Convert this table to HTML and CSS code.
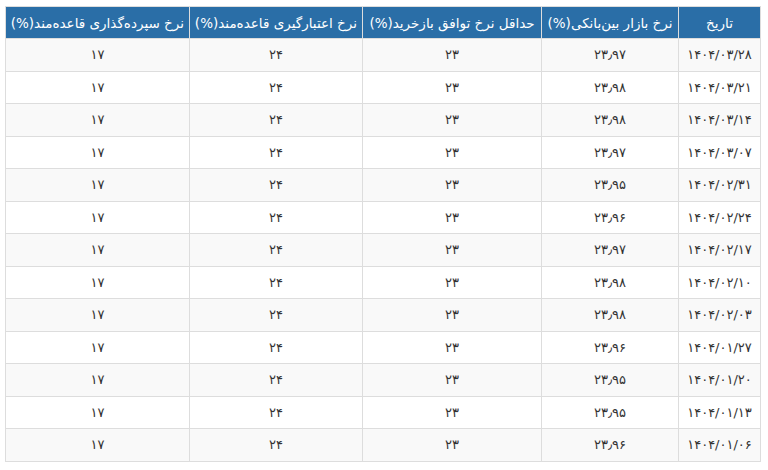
FILE: index.html
```html
<!DOCTYPE html>
<html lang="fa" dir="rtl">
<head>
<meta charset="utf-8">
<link rel="stylesheet" href="styles.css">
</head>
<body>
<table class="rates">
  <colgroup>
    <col class="c1"><col class="c2"><col class="c3"><col class="c4"><col class="c5">
  </colgroup>
  <thead>
    <tr>
      <th>تاریخ</th>
      <th>نرخ بازار بین‌بانکی(%)</th>
      <th>حداقل نرخ توافق بازخرید(%)</th>
      <th>نرخ اعتبارگیری قاعده‌مند(%)</th>
      <th>نرخ سپرده‌گذاری قاعده‌مند(%)</th>
    </tr>
  </thead>
  <tbody>
    <tr><td>۱۴۰۴/۰۳/۲۸</td><td>۲۳٫۹۷</td><td>۲۳</td><td>۲۴</td><td>۱۷</td></tr>
    <tr><td>۱۴۰۴/۰۳/۲۱</td><td>۲۳٫۹۸</td><td>۲۳</td><td>۲۴</td><td>۱۷</td></tr>
    <tr><td>۱۴۰۴/۰۳/۱۴</td><td>۲۳٫۹۸</td><td>۲۳</td><td>۲۴</td><td>۱۷</td></tr>
    <tr><td>۱۴۰۴/۰۳/۰۷</td><td>۲۳٫۹۷</td><td>۲۳</td><td>۲۴</td><td>۱۷</td></tr>
    <tr><td>۱۴۰۴/۰۲/۳۱</td><td>۲۳٫۹۵</td><td>۲۳</td><td>۲۴</td><td>۱۷</td></tr>
    <tr><td>۱۴۰۴/۰۲/۲۴</td><td>۲۳٫۹۶</td><td>۲۳</td><td>۲۴</td><td>۱۷</td></tr>
    <tr><td>۱۴۰۴/۰۲/۱۷</td><td>۲۳٫۹۷</td><td>۲۳</td><td>۲۴</td><td>۱۷</td></tr>
    <tr><td>۱۴۰۴/۰۲/۱۰</td><td>۲۳٫۹۸</td><td>۲۳</td><td>۲۴</td><td>۱۷</td></tr>
    <tr><td>۱۴۰۴/۰۲/۰۳</td><td>۲۳٫۹۸</td><td>۲۳</td><td>۲۴</td><td>۱۷</td></tr>
    <tr><td>۱۴۰۴/۰۱/۲۷</td><td>۲۳٫۹۶</td><td>۲۳</td><td>۲۴</td><td>۱۷</td></tr>
    <tr><td>۱۴۰۴/۰۱/۲۰</td><td>۲۳٫۹۵</td><td>۲۳</td><td>۲۴</td><td>۱۷</td></tr>
    <tr><td>۱۴۰۴/۰۱/۱۳</td><td>۲۳٫۹۵</td><td>۲۳</td><td>۲۴</td><td>۱۷</td></tr>
    <tr><td>۱۴۰۴/۰۱/۰۶</td><td>۲۳٫۹۶</td><td>۲۳</td><td>۲۴</td><td>۱۷</td></tr>
  </tbody>
</table>
</body>
</html>
```
FILE: styles.css
```css
html, body {
  margin: 0;
  padding: 0;
  background: #ffffff;
}
body {
  padding: 6px 7px 0 6px;
  font-family: "DejaVu Sans", "Noto Sans", sans-serif;
  font-size: 13px;
  color: #333333;
}
.rates {
  width: 755px;
  border-collapse: collapse;
  table-layout: fixed;
}
.c1 { width: 82px; }
.c2 { width: 137px; }
.c3 { width: 179px; }
.c4 { width: 173px; }
.c5 { width: 184px; }
.rates th {
  background: #2a6ea7;
  color: #ffffff;
  font-weight: normal;
  font-size: 13.5px;
  height: 31px;
  padding: 0 5px;
  border: 1px solid #dddddd;
  white-space: nowrap;
  text-align: center;
}
.rates td {
  height: 31.5px;
  padding: 0 6px;
  border: 1px solid #dddddd;
  text-align: center;
}
.rates tbody tr:nth-child(odd) td {
  background: #f9f9f9;
}
```
